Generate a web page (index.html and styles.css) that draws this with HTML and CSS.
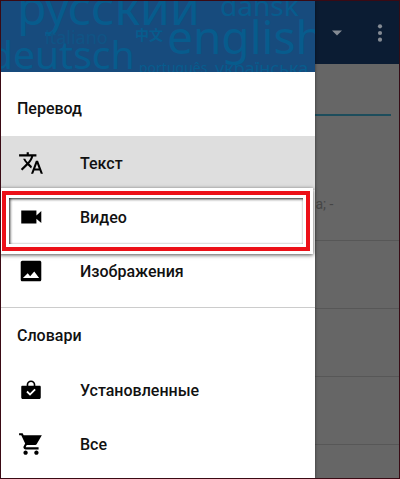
FILE: index.html
```html
<!DOCTYPE html>
<html lang="ru">
<head>
    <meta charset="UTF-8">
    <meta name="viewport" content="width=device-width, initial-scale=1.0">
    <title>Переводчик</title>
    <link rel="stylesheet" href="styles.css">
</head>
<body>

<div class="screen">
    <!-- Navigation drawer -->
    <nav class="drawer">
        <div class="cover" aria-hidden="true">
            <span class="word word-ru">русский</span>
            <span class="word word-da">dansk</span>
            <span class="word word-it">italiano</span>
            <span class="word word-zh">中文</span>
            <span class="word word-en">english</span>
            <span class="word word-de">deutsch</span>
            <span class="word word-pt">português</span>
            <span class="word word-uk">українська</span>
        </div>

        <section class="group">
            <h2>Перевод</h2>
            <a class="item active" href="#text">
                <svg class="icon" viewBox="0 0 24 24"><path d="M12.87 15.07l-2.54-2.51.03-.03c1.74-1.94 2.98-4.17 3.71-6.53H17V4h-7V2H8v2H1v1.99h11.17C11.5 7.92 10.44 9.75 9 11.35 8.07 10.32 7.3 9.19 6.69 8h-2c.73 1.63 1.73 3.17 2.98 4.56l-5.09 5.02L4 19l5-5 3.11 3.11.76-2.04zM18.5 10h-2L12 22h2l1.12-3h4.75L21 22h2l-4.5-12zm-2.62 7l1.62-4.33L19.12 17h-3.24z"/></svg>
                <span>Текст</span>
            </a>
            <a class="item marked" href="#video">
                <svg class="icon" viewBox="0 0 24 24"><path d="M17 10.500V6H3v12h14v-4.500l4.500 4v-11l-4.500 4z"/></svg>
                <span>Видео</span>
            </a>
            <a class="item" href="#images">
                <svg class="icon" viewBox="0 0 24 24"><path d="M21.500 20V4c0-.9-.7-1.500-1.500-1.500H4c-.8 0-1.500.7-1.500 1.500v16c0 .8.7 1.500 1.500 1.500h16c.8 0 1.500-.7 1.500-1.500zM9 14l2.200 2.800L15 12.500l4.500 6H4.500L9 14z"/></svg>
                <span>Изображения</span>
            </a>
        </section>

        <section class="group">
            <h2>Словари</h2>
            <a class="item" href="#installed">
                <svg class="icon" viewBox="0 0 24 24"><path fill-rule="evenodd" d="M16 8V7c0-2.200-1.800-3.800-4-3.800S8 4.800 8 7v1H4c-.6 0-1 .4-1 1v10c0 .8.6 1.400 1.400 1.400h15.200c.8 0 1.400-.6 1.400-1.400V9c0-.6-.4-1-1-1h-4zM9.500 7c0-1.400 1.100-2.300 2.500-2.300s2.500.9 2.500 2.300v1h-5V7zm1.600 10.300L7.700 14l1.200-1.200 2.200 2.200 4.100-4.100 1.200 1.200-5.300 5.200z"/></svg>
                <span>Установленные</span>
            </a>
            <a class="item" href="#all">
                <svg class="icon" viewBox="0 0 24 24"><path d="M7 18c-1.100 0-1.990.9-1.990 2S5.900 22 7 22s2-.9 2-2-.9-2-2-2zM1 2v2h2l3.600 7.590-1.350 2.450c-.16.28-.25.610-.25.960 0 1.100.9 2 2 2h12v-2H7.420c-.14 0-.25-.11-.25-.25l.03-.12.9-1.630h7.450c.75 0 1.410-.41 1.750-1.030L22 4H5.210l-.94-2H1zm16 16c-1.100 0-1.990.9-1.990 2s.89 2 1.990 2 2-.9 2-2-.9-2-2-2z"/></svg>
                <span>Все</span>
            </a>
        </section>
    </nav>

    <!-- Dimmed page behind the drawer -->
    <main class="page">
        <header class="toolbar">
            <button class="tool" aria-label="Выбрать язык">
                <svg viewBox="0 0 24 24"><path d="M6 9h12l-6 6z"/></svg>
            </button>
            <button class="tool" aria-label="Меню">
                <svg viewBox="0 0 24 24"><circle cx="12" cy="4" r="2.500"/><circle cx="12" cy="12" r="2.500"/><circle cx="12" cy="20" r="2.500"/></svg>
            </button>
        </header>
        <div class="field"></div>
        <p class="entry">а; -</p>
        <div class="row"></div>
        <div class="row"></div>
        <div class="row"></div>
    </main>
</div>

</body>
</html>
```

FILE: styles.css
```css
* {
    box-sizing: border-box;
}

body {
    margin: 0;
    font-family: Roboto, "Noto Sans", sans-serif;
    font-size: 16px;
    color: #111;
}

.screen {
    display: flex;
    min-height: 100vh;
    border: 1px solid #3a0a14;
    background-color: #666;
    overflow: hidden;
}

/* Drawer */
.drawer {
    width: 79%;
    background-color: #fff;
    box-shadow: 0 0 3px rgba(0, 0, 0, 0.5);
    z-index: 1;
}

.cover {
    position: relative;
    height: 71px;
    background-color: #174b7d;
    overflow: hidden;
    font-family: "Noto Sans", "Noto Sans CJK SC", sans-serif;
    color: #075c8d;
}

/* Word cloud, the words are scattered freely */
.word {
    position: absolute;
    line-height: 1;
    white-space: nowrap;
}

.word-ru {
    left: 16px;
    top: -18px;
    font-size: 48px;
}

.word-da {
    left: 219px;
    top: -10px;
    font-size: 28px;
}

.word-it {
    left: 44px;
    top: 27px;
    font-size: 18px;
    color: #0f5485;
}

.word-zh {
    left: 134px;
    top: 27px;
    font-size: 14px;
    font-weight: bold;
}

.word-en {
    left: 166px;
    top: 12px;
    font-size: 46px;
}

.word-de {
    left: -12px;
    top: 33px;
    font-size: 39px;
}

.word-pt {
    left: 138px;
    top: 60px;
    font-size: 14px;
}

.word-uk {
    left: 214px;
    top: 58px;
    font-size: 18px;
}

.group + .group {
    border-top: 1px solid #ccc;
    margin-top: 9px;
}

.group h2 {
    margin: 0;
    padding: 18px 16px 17px;
    font-size: 16px;
    font-weight: 500;
    line-height: 20px;
}

.group:first-of-type h2 {
    padding-top: 27px;
}

.item {
    position: relative;
    display: flex;
    align-items: center;
    gap: 36px;
    height: 54px;
    padding: 0 17px;
    color: inherit;
    font-weight: 500;
    text-decoration: none;
}

.item.active {
    background-color: #dedede;
}

.icon {
    width: 26px;
    height: 26px;
    fill: #000;
}

/* Red frame round the highlighted item */
.marked {
    z-index: 1;
}

.marked::before {
    content: "";
    position: absolute;
    inset: 1px 5px -7px 1px;
    border: 4px solid #ec1018;
    box-shadow: 0 0 0 3px #fff, 0 1px 4px 3px rgba(0, 0, 0, 0.7), inset 0 0 0 3px #fff;
}

.marked::after {
    content: "";
    position: absolute;
    inset: 8px 12px 0 8px;
    box-shadow: inset 1px 1px 3px rgba(0, 0, 0, 0.9);
}

/* Page */
.page {
    flex: 1;
    font-size: 14px;
    color: #454545;
}

.toolbar {
    display: flex;
    align-items: center;
    justify-content: space-between;
    height: 63px;
    padding: 0 9px 0 12px;
    background-color: #0b1c33;
}

.tool {
    width: 20px;
    height: 20px;
    padding: 0;
    border: none;
    background: none;
}

.tool svg {
    display: block;
    width: 20px;
    height: 20px;
    fill: #858b94;
}

.field {
    height: 52px;
    margin-right: 8px;
    border-bottom: 2px solid #1d4d5c;
}

.entry {
    height: 125px;
    margin: 0;
    padding-top: 78px;
    line-height: 20px;
    border-bottom: 1px solid #575757;
}

.row {
    height: 68px;
    border-bottom: 1px solid #575757;
}
```
